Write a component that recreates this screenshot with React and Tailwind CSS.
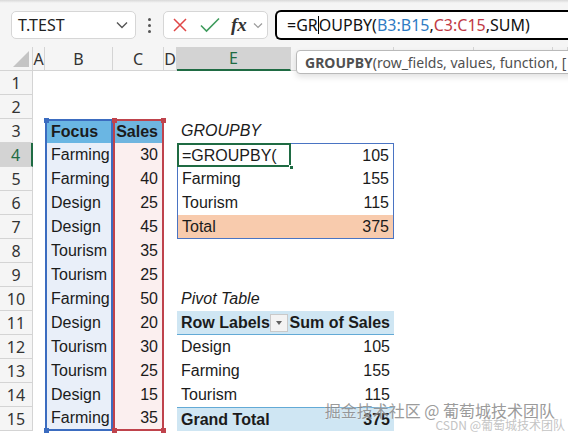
import React from "react";

const cols = ["A", "B", "C", "D", "E", "F", "G", "H", "I"];

const sales = [
  ["Farming", 30],
  ["Farming", 40],
  ["Design", 25],
  ["Design", 45],
  ["Tourism", 35],
  ["Tourism", 25],
  ["Farming", 50],
  ["Design", 20],
  ["Tourism", 30],
  ["Tourism", 25],
  ["Design", 15],
  ["Farming", 35],
];

const groupby = { 5: ["Farming", 155], 6: ["Tourism", 115], 7: ["Total", 375] };
const pivot = { 12: ["Design", 105], 13: ["Farming", 155], 14: ["Tourism", 115] };

function Handle({ color, pos }) {
  return <span className={`absolute w-[5px] h-[5px] ${color} ${pos}`} />;
}

function Cell({ r, c }) {
  let cls = "relative flex items-center min-w-0 whitespace-nowrap px-1";
  let body = null;

  if (c === "B" && r >= 3) {
    cls += " border-l-2 border-r-2 border-[#3b6cc0]";
    cls += r === 3 ? " border-t-2 bg-[#6ab6e3] font-bold" : " bg-[#e9eff9]";
    if (r === 15) cls += " border-b-2";
    body = r === 3 ? "Focus" : sales[r - 4][0];
    if (r === 3) body = <>{body}<Handle color="bg-[#3b6cc0]" pos="-left-[3.5px] -top-[3.5px]" /></>;
    if (r === 15) body = <>{body}<Handle color="bg-[#3b6cc0]" pos="-left-[3.5px] -bottom-[3.5px]" /></>;
  }

  if (c === "C" && r >= 3) {
    cls += " justify-end border-l-2 border-r-2 border-[#bf434c]";
    cls += r === 3 ? " border-t-2 bg-[#6fb5df] font-bold" : " bg-[#fbefef]";
    if (r === 15) cls += " border-b-2";
    body = r === 3 ? "Sales" : sales[r - 4][1];
    if (r === 3)
      body = (
        <>
          {body}
          <Handle color="bg-[#bf434c]" pos="-left-[3.5px] -top-[3.5px]" />
          <Handle color="bg-[#bf434c]" pos="-right-[3.5px] -top-[3.5px]" />
        </>
      );
    if (r === 15)
      body = (
        <>
          {body}
          <Handle color="bg-[#bf434c]" pos="-left-[3.5px] -bottom-[3.5px]" />
          <Handle color="bg-[#bf434c]" pos="-right-[3.5px] -bottom-[3.5px]" />
        </>
      );
  }

  // GROUPBY block
  if ((c === "E" || c === "F") && r >= 4 && r <= 7) {
    cls += " border-[#4a74c3]";
    cls += c === "E" ? " border-l" : " border-r justify-end";
    if (r === 4) cls += " border-t";
    if (r === 7) cls += " border-b bg-[#f8cbad]";
    if (r === 4) body = c === "E" ? "=GROUPBY(" : "105";
    else body = c === "E" ? groupby[r][0] : groupby[r][1];
    if (r === 4 && c === "E")
      body = (
        <>
          {body}
          <span className="absolute -left-px -top-px -right-0 -bottom-0 border-2 border-[#1f6b43]" />
          <span className="absolute -right-[3px] -bottom-[3px] w-[5px] h-[5px] bg-[#1f6b43] border border-white" />
        </>
      );
  }
  if (c === "E" && r === 3) body = <span className="italic">GROUPBY</span>;
  if (c === "E" && r === 10) body = <span className="italic">Pivot Table</span>;

  // Pivot block
  if ((c === "E" || c === "F") && (r === 11 || r === 15)) {
    cls += " bg-[#cfe6f3] font-bold border-[#63aad6]";
    cls += r === 11 ? " border-b" : " border-t";
    if (c === "F") cls += " justify-end";
    if (r === 11 && c === "E")
      body = (
        <div className="flex w-full items-center justify-between">
          <span>Row Labels</span>
          <span className="flex h-[18px] w-[20px] items-center justify-center border border-[#c9c9c9] bg-[#f3f3f3] mr-[-1px]">
            <span className="border-x-[3.5px] border-t-[4px] border-x-transparent border-t-[#606060]" />
          </span>
        </div>
      );
    if (r === 11 && c === "F") body = "Sum of Sales";
    if (r === 15) body = c === "E" ? "Grand Total" : "375";
  }
  if ((c === "E" || c === "F") && pivot[r]) {
    if (c === "F") cls += " justify-end";
    body = c === "E" ? pivot[r][0] : pivot[r][1];
  }

  return <div className={cls}>{body}</div>;
}

export default function App() {
  const rows = Array.from({ length: 15 }, (_, i) => i + 1);

  return (
    <div className="relative h-[433px] w-[568px] overflow-hidden bg-white font-['Liberation_Sans',Arial,sans-serif] text-[16px] text-[#1b1b1b]">
      {/* Toolbar */}
      <div className="relative h-[47px] bg-[#f5f5f5] font-['Noto_Sans',sans-serif]">
        <div className="h-[3px] bg-gradient-to-b from-[#d9d9d9] to-[#f5f5f5]" />
        <div className="flex items-center gap-[7px] pl-[11px] pt-[7px]">
          <div className="flex h-[28px] w-[125px] items-center justify-between rounded-[5px] border border-[#d6d6d6] bg-white pl-[6px] pr-[7px]">
            <span className="text-[16px] text-[#222]">T.TEST</span>
            <svg width="12" height="8" viewBox="0 0 12 8" fill="none" stroke="#555" strokeWidth="1.4">
              <path d="M1 1.5l5 5 5-5" />
            </svg>
          </div>
          <div className="flex w-[13px] flex-col items-center gap-[3px]">
            <span className="h-[3px] w-[3px] rounded-full bg-[#555]" />
            <span className="h-[3px] w-[3px] rounded-full bg-[#555]" />
            <span className="h-[3px] w-[3px] rounded-full bg-[#555]" />
          </div>
          <div className="flex h-[28px] w-[105px] items-center rounded-[5px] border border-[#d6d6d6] bg-white pl-[8px]">
            <svg width="16" height="16" viewBox="0 0 16 16" stroke="#e04646" strokeWidth="1.5">
              <path d="M2 2l12 12M14 2L2 14" />
            </svg>
            <svg className="ml-[12px]" width="20" height="16" viewBox="0 0 20 16" fill="none" stroke="#3f9c5d" strokeWidth="1.6">
              <path d="M1 8.5l5.5 5.5L19 1.5" />
            </svg>
            <span className="ml-[11px] font-['Liberation_Serif',serif] text-[19px] font-semibold italic text-[#333]">fx</span>
            <svg className="ml-[6px]" width="10" height="7" viewBox="0 0 10 7" fill="none" stroke="#9a9a9a" strokeWidth="1.2">
              <path d="M1 1.5l4 4 4-4" />
            </svg>
          </div>
          <div className="flex h-[30px] flex-1 items-center rounded-l-[6px] border-2 border-r-0 border-black bg-white pl-[10px] text-[16px] text-[#111]">
            <span>=GR</span>
            <span className="h-[18px] w-px bg-black" />
            <span>OUPBY(</span>
            <span className="text-[#2f7cc4]">B3:B15</span>
            <span>,</span>
            <span className="text-[#c13a45]">C3:C15</span>
            <span>,SUM)</span>
          </div>
        </div>
      </div>

      {/* Sheet grid */}
      <div className="grid grid-cols-[33px_12px_68px_51px_13px_114px_103px_80px_79px_1fr] auto-rows-[24px]">
        {/* column headers */}
        <div className="relative border-b border-r border-[#d4d4d4] bg-[#f5f5f5]">
          <span className="absolute bottom-[3px] right-[3px] border-b-[16px] border-l-[16px] border-b-[#c4c4c4] border-l-transparent" />
        </div>
        {cols.map((c) => (
          <div
            key={c}
            className={`flex items-center justify-center border-r font-['Noto_Sans',sans-serif] text-[16px] ${
              c === "E"
                ? "border-b-2 border-b-[#1f6b43] border-r-[#d4d4d4] bg-[#d3d3d3] text-[#1f6b43]"
                : "border-b border-[#d4d4d4] bg-[#f5f5f5] text-[#333]"
            }`}
          >
            {["G", "H", "I"].includes(c) ? "" : c}
          </div>
        ))}

        {rows.map((r) => (
          <React.Fragment key={r}>
            <div
              className={`flex items-center justify-center border-b border-[#d4d4d4] font-['Noto_Sans',sans-serif] text-[16px] ${
                r === 4
                  ? "border-r-2 border-r-[#1f6b43] bg-[#d3d3d3] text-[#1f6b43]"
                  : "border-r bg-[#f5f5f5] text-[#333]"
              }`}
            >
              {r}
            </div>
            {cols.map((c) => (
              <Cell key={c} r={r} c={c} />
            ))}
          </React.Fragment>
        ))}
      </div>

      {/* function tooltip */}
      <div className="absolute left-[296px] top-[50px] flex h-[24px] w-[290px] items-center rounded-[4px] border border-[#b9b9b9] bg-white pl-[8px] font-['Noto_Sans',sans-serif] text-[14px] text-[#505050] shadow-[0_3px_6px_rgba(0,0,0,0.12)]">
        <span className="font-bold">GROUPBY</span>
        <span>(row_fields, values, function, [</span>
      </div>

      {/* watermark */}
      <div className="pointer-events-none absolute bottom-[2px] right-[3px] flex flex-col items-end font-['Noto_Sans_CJK_SC',sans-serif] leading-none">
        <span className="mr-[10px] text-[16px] text-[#8a8a8a] opacity-85 [text-shadow:0_0_2px_#fff]">掘金技术社区 @ 葡萄城技术团队</span>
        <span className="mt-[1px] text-[12px] text-[#c4c4c4]">CSDN @葡萄城技术团队</span>
      </div>
    </div>
  );
}
